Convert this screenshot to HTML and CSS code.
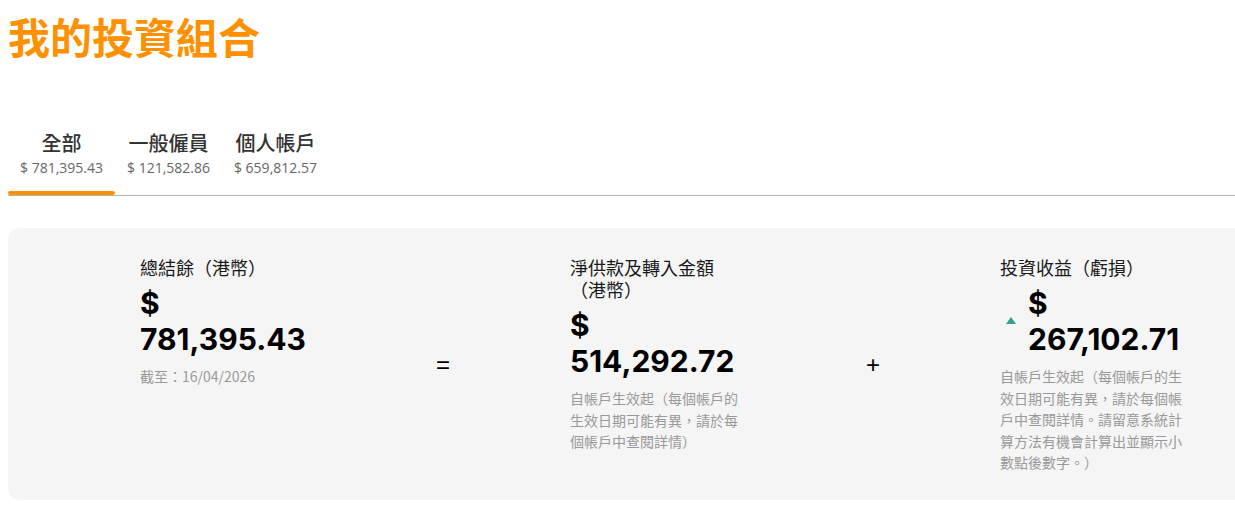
FILE: index.html
```html
<!DOCTYPE html>
<html lang="zh-Hant">
<head>
<meta charset="utf-8">
<title>我的投資組合</title>
<link rel="stylesheet" href="styles.css">
</head>
<body>
<div class="page">
  <h1 class="title">我的投資組合</h1>
  <nav class="tabs">
    <div class="tab active">
      <div class="tab-name">全部</div>
      <div class="tab-amt">$ 781,395.43</div>
    </div>
    <div class="tab">
      <div class="tab-name">一般僱員</div>
      <div class="tab-amt">$ 121,582.86</div>
    </div>
    <div class="tab">
      <div class="tab-name">個人帳戶</div>
      <div class="tab-amt">$ 659,812.57</div>
    </div>
  </nav>
  <section class="card">
    <div class="col col-1">
      <div class="label">總結餘（港幣）</div>
      <div class="amount">$ 781,395.43</div>
      <div class="note">截至：16/04/2026</div>
    </div>
    <div class="op op-1">=</div>
    <div class="col col-2">
      <div class="label">淨供款及轉入金額（港幣）</div>
      <div class="amount">$ 514,292.72</div>
      <div class="note">自帳戶生效起（每個帳戶的生效日期可能有異，請於每個帳戶中查閱詳情）</div>
    </div>
    <div class="op op-2">+</div>
    <div class="col col-3">
      <div class="label">投資收益（虧損）</div>
      <div class="amount-row">
        <span class="tri"></span>
        <div class="amount">$ 267,102.71</div>
      </div>
      <div class="note">自帳戶生效起（每個帳戶的生效日期可能有異，請於每個帳戶中查閱詳情。請留意系統計算方法有機會計算出並顯示小數點後數字。）</div>
    </div>
  </section>
</div>
</body>
</html>
```

FILE: styles.css
```css
html, body {
  margin: 0;
  padding: 0;
  background: #ffffff;
}
body {
  font-family: "Noto Sans CJK TC", "Noto Sans", sans-serif;
  color: #1a1a1a;
}
.page {
  padding: 8px 0 0 8px;
  overflow: hidden;
}
.title {
  margin: 4px 0 0 0;
  font-size: 42px;
  line-height: 48px;
  font-weight: 700;
  color: #ff9100;
}
.tabs {
  display: flex;
  margin-top: 69px;
  border-bottom: 1px solid #b3b3b3;
  width: 1300px;
}
.tab {
  position: relative;
  padding: 0 12px 18px;
  text-align: center;
}
.tab-name {
  font-size: 20px;
  line-height: 28px;
  font-weight: 500;
  color: #333333;
}
.tab-amt {
  margin-top: 2px;
  font-family: "Open Sans", "Noto Sans CJK TC", sans-serif;
  font-size: 14px;
  line-height: 18px;
  color: #666666;
}
.tab.active::after {
  content: "";
  position: absolute;
  left: 0;
  right: 0;
  bottom: 0;
  height: 4px;
  border-radius: 2px;
  background: #ff9100;
}
.card {
  display: flex;
  align-items: flex-start;
  margin-top: 32px;
  width: 1300px;
  box-sizing: border-box;
  padding: 28px 0 26px 132px;
  background: #f5f5f5;
  border-radius: 12px;
}
.col-1, .col-2 {
  width: 176px;
}
.col-3 {
  width: 190px;
}
.label {
  font-size: 18px;
  line-height: 22px;
  color: #1a1a1a;
}
.amount {
  margin-top: 7px;
  font-family: "Inter", "Noto Sans", sans-serif;
  font-size: 30px;
  line-height: 36px;
  font-weight: 700;
  color: #000000;
}
.amount-row {
  display: flex;
  align-items: center;
}
.amount-row .amount {
  flex: 1;
  min-width: 0;
}
.tri {
  width: 0;
  height: 0;
  margin: 6px 12px 0 6px;
  border-left: 5px solid transparent;
  border-right: 5px solid transparent;
  border-bottom: 7px solid #33a08d;
}
.note {
  margin-top: 9px;
  font-size: 14px;
  line-height: 21.6px;
  color: #999999;
}
.op {
  align-self: center;
  text-align: center;
  font-family: "Liberation Sans", sans-serif;
  font-size: 24px;
  line-height: 28px;
  color: #000000;
}
.op-1, .op-2 {
  width: 254px;
}
```
